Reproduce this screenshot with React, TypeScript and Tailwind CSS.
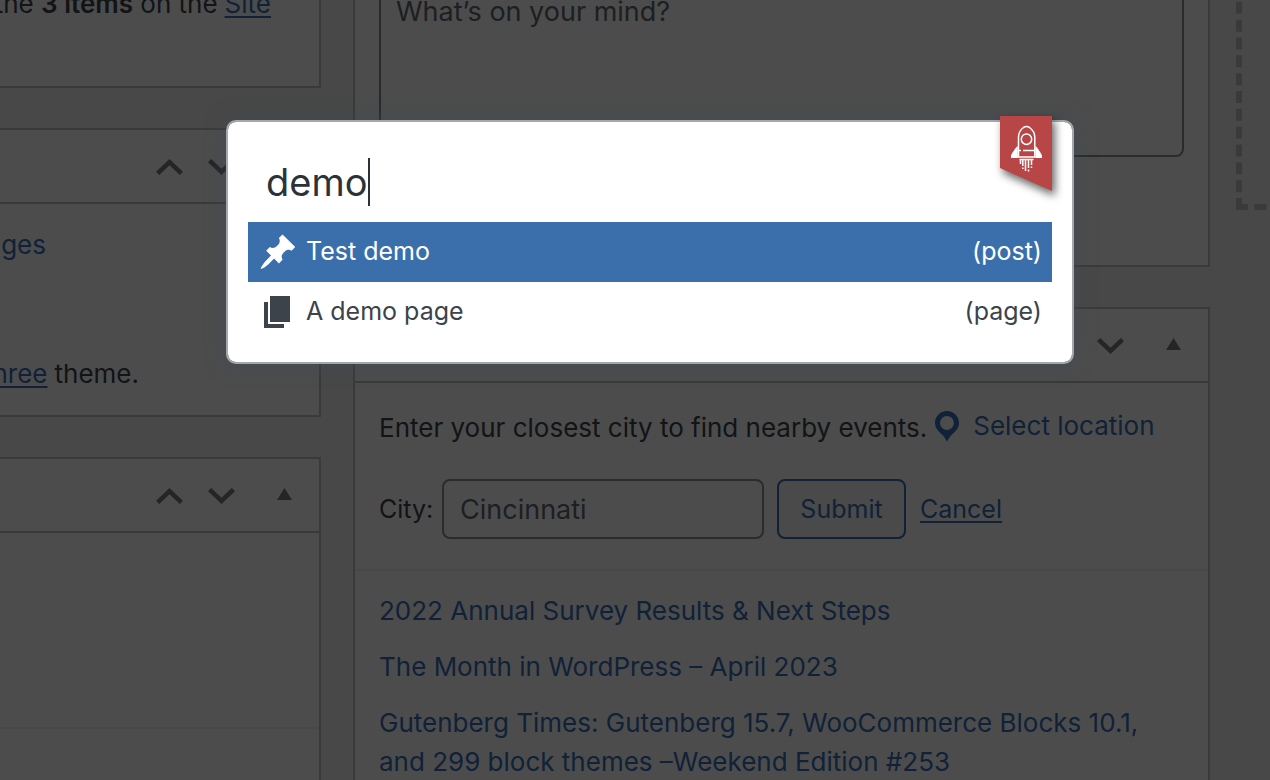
import React, { useState } from "react";

function Chevron({ up = false }: { up?: boolean }) {
  return (
    <svg className="h-4 w-[27px]" viewBox="0 0 27 16" fill="none" stroke="#787c82" strokeWidth="4.6" aria-hidden="true">
      <path d={up ? "M1.6 14.4 13.5 3.2 25.4 14.4" : "M1.6 1.6 13.5 12.8 25.4 1.6"} />
    </svg>
  );
}

function PanelHeader() {
  return (
    <div className="flex h-[74px] items-start justify-end border-b-2 border-[#c3c4c7] pt-[29px] pr-[27px]">
      <button type="button" aria-label="Move up" className="mr-[25px]">
        <Chevron up />
      </button>
      <button type="button" aria-label="Move down" className="mr-[42px]">
        <Chevron />
      </button>
      <button type="button" aria-label="Toggle panel">
        <svg className="h-3 w-[15px]" viewBox="0 0 15 12" fill="#787c82" aria-hidden="true">
          <path d="M7.5 0 15 12H0z" />
        </svg>
      </button>
    </div>
  );
}

function PinIcon() {
  return (
    <svg className="size-10" viewBox="0 0 20 20" fill="currentColor" aria-hidden="true">
      <path d="M10.44 3.02l1.82-1.82 6.36 6.35-1.83 1.82c-1.05-.68-2.48-.57-3.41.36l-.75.75c-.92.93-1.04 2.35-.35 3.41l-1.83 1.82-2.41-2.41-2.8 2.79c-.42.42-3.38 2.71-3.8 2.29s1.86-3.39 2.28-3.81l2.79-2.79L4.1 9.36l1.83-1.82c1.05.69 2.48.57 3.4-.36l.75-.75c.93-.92 1.05-2.35.36-3.41z" />
    </svg>
  );
}

function PageIcon() {
  return (
    <svg className="size-10" viewBox="0 0 20 20" fill="currentColor" aria-hidden="true">
      <path d="M6 15V2h10v13H6zm-1 1h8v2H3V5h2v11z" />
    </svg>
  );
}

function LocationIcon() {
  return (
    <svg className="size-10" viewBox="0 0 20 20" fill="currentColor" aria-hidden="true">
      <path d="M10 2C6.69 2 4 4.69 4 8c0 2.02 1.17 3.71 2.53 4.89.43.37 1.18.96 1.85 1.83.74.97 1.41 2.01 1.62 2.71.21-.7.88-1.74 1.62-2.71.67-.87 1.42-1.46 1.85-1.83C14.83 11.71 16 10.02 16 8c0-3.31-2.69-6-6-6zm0 2.56c1.9 0 3.44 1.54 3.44 3.44S11.9 11.44 10 11.44 6.56 9.9 6.56 8 8.1 4.56 10 4.56z" />
    </svg>
  );
}

function Ribbon() {
  return (
    <svg
      className="absolute -top-[6px] right-5 h-[75px] w-[52px] overflow-visible drop-shadow-[3px_5px_4px_rgba(0,0,0,0.6)]"
      viewBox="0 0 52 75"
      aria-hidden="true"
    >
      <path d="M0 0H52V75L0 52z" fill="#b94646" />
      <g fill="none" stroke="#fff" strokeWidth="1.5">
        <path d="M18.500 41V21c0-4 2.300-7.500 5-9.500 2-1.300 4-1.300 6 0 2.700 2 5.300 5.500 5.300 9.500V41z" />
        <circle cx="26.500" cy="23.200" r="5.200" />
        <path d="M19 34.500h2M23 34.500H34.500M19.500 43.500h14" />
        <path d="M22.800 44v6M25.500 44v11M28.500 44v8M31.500 44v5" />
        <path d="M20.500 44v4M22.800 51.500v1.500M28.500 53.500v2M31.500 50.500v1.500" />
      </g>
      <path d="M17.800 30V42H11v-2.500c0-.8 5.300-9 6.800-9.500zM35.400 30V42H42v-2.500c0-.8-5.200-9-6.600-9.500z" fill="#fff" />
    </svg>
  );
}

const news = [
  "2022 Annual Survey Results & Next Steps",
  "The Month in WordPress – April 2023",
  "Gutenberg Times: Gutenberg 15.7, WooCommerce Blocks 10.1, and 299 block themes –Weekend Edition #253",
];

const results = [
  { title: "Test demo", type: "(post)", icon: <PinIcon />, active: true },
  { title: "A demo page", type: "(page)", icon: <PageIcon />, active: false },
];

function Dashboard() {
  return (
    <div className="flex h-screen items-start overflow-hidden">
      <div className="-ml-6 flex w-[345px] shrink-0 flex-col gap-10">
        <section className="h-[88px] border-r-2 border-b-2 border-[#c3c4c7] bg-white">
          <p className="-mt-4 flex justify-end gap-[7px] pr-12 whitespace-nowrap">
            <span>
              the <strong className="font-semibold">3 items</strong> on the
            </span>
            <a href="#site" className="text-[#3870bc] underline underline-offset-3">Site</a>
          </p>
        </section>
        <section className="h-[289px] border-2 border-[#c3c4c7] bg-white">
          <PanelHeader />
          <div className="flex flex-col gap-[90px] pt-[21px] pl-6">
            <a href="#pages" className="flex w-[44px] justify-end self-start text-[#3870bc]">
              Pages
            </a>
            <p className="flex w-[137px] justify-end gap-[7px] whitespace-nowrap">
              <a href="#theme" className="text-[#3870bc] underline underline-offset-3">Three</a>
              theme.
            </p>
          </div>
        </section>
        <section className="h-[400px] border-2 border-[#c3c4c7] bg-white">
          <PanelHeader />
          <div className="h-[196px] border-b-2 border-[#f0f0f1]" />
        </section>
      </div>

      <div className="ml-8 flex min-w-0 flex-1 flex-col gap-10">
        <section className="h-[267px] border-x-2 border-b-2 border-[#c3c4c7] bg-white px-6">
          <textarea
            aria-label="Content"
            placeholder="What’s on your mind?"
            className="-mt-4 block h-[173px] w-full resize-none rounded-lg border-2 border-[#8c8f94] bg-white px-[15px] pt-1.5 text-[27px] placeholder:text-[#646970]"
          />
        </section>
        <section className="border-2 border-[#c3c4c7] bg-white">
          <PanelHeader />
          <div className="border-b-2 border-[#f0f0f1] px-6 pt-6 pb-[30px]">
            <div className="flex h-10 items-center">
              <p className="whitespace-nowrap">Enter your closest city to find nearby events.</p>
              <button type="button" className="flex items-center gap-[6px] whitespace-nowrap text-[#3870bc]">
                <LocationIcon />
                <span className="pb-[3px]">Select location</span>
              </button>
            </div>
            <form className="mt-8 flex h-[60px] items-center text-[25px]" onSubmit={(e) => e.preventDefault()}>
              <label htmlFor="city" className="w-[63px]">City:</label>
              <input
                id="city"
                placeholder="Cincinnati"
                className="h-[60px] w-[322px] rounded-lg border-2 border-[#8c8f94] bg-white px-4 text-[27px] placeholder:text-[#646970]"
              />
              <button type="submit" className="ml-[13px] h-[60px] w-[129px] rounded-lg border-2 border-[#3870bc] bg-[#f3f8f6] text-[#3870bc]">
                Submit
              </button>
              <a href="#cancel" className="ml-[14px] text-[#3870bc] underline underline-offset-3">Cancel</a>
            </form>
          </div>
          <ul className="flex flex-col gap-[17px] px-6 pt-5 pb-6">
            {news.map((title) => (
              <li key={title}>
                <a href="#news" className="text-[#3870bc]">{title}</a>
              </li>
            ))}
          </ul>
        </section>
      </div>

      <div className="ml-[26px] w-[34px] shrink-0">
        <div className="-mt-4 h-[226px] w-40 border-6 border-dashed border-[#c3c4c7]" />
      </div>
    </div>
  );
}

export default function App() {
  const [query, setQuery] = useState("demo");
  return (
    <div className="relative bg-[#f0f0f1] font-['Inter',sans-serif] text-[26px] leading-[39px] text-[#3c434a]">
      <Dashboard />
      <div className="absolute inset-0 bg-black/70 pt-[120px] pr-[196px] pl-[226px] text-[25px]">
        <div role="dialog" aria-label="Search" className="relative rounded-[10px] border-2 border-[#a6a7a9] bg-white bg-clip-padding p-5 shadow-[0_0_20px_rgba(60,75,95,0.5)]">
          <div className="flex h-20 items-center pl-[18px]">
            <input
              aria-label="Search"
              value={query}
              onChange={(e) => setQuery(e.target.value)}
              className="h-20 [field-sizing:content] text-[38px] text-[#2c3338] caret-transparent outline-none"
            />
            <span className="h-12 w-[2px] bg-[#2c3338]" />
          </div>
          <ul>
            {results.map((r) => (
              <li key={r.title}>
                <a
                  href="#result"
                  className={
                    r.active
                      ? "flex h-[60px] items-center gap-2 bg-[#3b6fac] px-[10px] text-white"
                      : "flex h-[60px] items-center gap-2 px-[10px] text-[#3c434a]"
                  }
                >
                  {r.icon}
                  <span className="flex-1 pb-0.5">{r.title}</span>
                  <span className="pb-0.5">{r.type}</span>
                </a>
              </li>
            ))}
          </ul>
          <Ribbon />
        </div>
      </div>
    </div>
  );
}
